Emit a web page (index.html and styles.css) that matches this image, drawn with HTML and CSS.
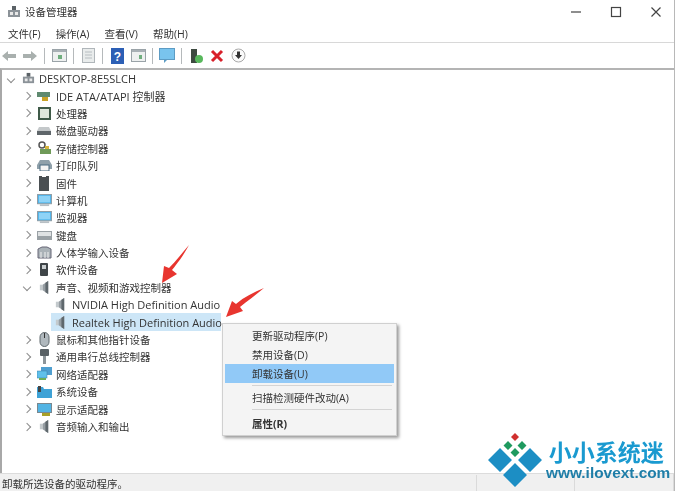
FILE: index.html
```html
<!DOCTYPE html>
<html lang="zh-CN">
<head>
  <meta charset="UTF-8" />
  <title>设备管理器</title>
  <link rel="stylesheet" href="styles.css">
</head>
<body>
  <svg class="sprite" width="0" height="0">
    <symbol id="speaker" viewBox="0 0 14 16">
      <path d="M2 5h3v6H2z" fill="#c4cacd"/>
      <path d="M5 5l6-4v14l-6-4z" fill="#969ea3"/>
      <path d="M8 3l3-2v14l-3-2z" fill="#5f686d"/>
    </symbol>
    <symbol id="computer" viewBox="0 0 14 14">
      <rect x="1" y="5" width="12" height="7" fill="#8b9298"/>
      <rect x="5" y="1" width="4" height="4" fill="#5b6267"/>
      <rect x="3" y="7" width="3" height="3" fill="#e8e8e8"/>
      <rect x="8" y="7" width="3" height="3" fill="#e8e8e8"/>
    </symbol>
    <symbol id="monitor" viewBox="0 0 16 14">
      <rect x="0.5" y="0.5" width="15" height="10" fill="#4fb4ea" stroke="#8f9aa2"/>
      <rect x="2" y="2" width="12" height="7" fill="#8fd3f6"/>
      <rect x="3" y="11" width="10" height="2" fill="#b8bfc4"/>
    </symbol>
  </svg>

  <div class="window">
    <header class="titlebar">
      <svg class="title-icon" width="14" height="14"><use href="#computer"/></svg>
      <span class="title-text">设备管理器</span>
      <div class="caption">
        <svg width="12" height="12" viewBox="0 0 12 12"><path d="M1 6h10" stroke="#444" stroke-width="1.2"/></svg>
        <svg width="12" height="12" viewBox="0 0 12 12"><rect x="1.5" y="1.5" width="9" height="9" fill="none" stroke="#444" stroke-width="1.2"/></svg>
        <svg width="12" height="12" viewBox="0 0 12 12"><path d="M1.5 1.5l9 9M10.5 1.5l-9 9" stroke="#444" stroke-width="1.2"/></svg>
      </div>
    </header>

    <nav class="menubar">
      <span>文件(F)</span>
      <span>操作(A)</span>
      <span>查看(V)</span>
      <span>帮助(H)</span>
    </nav>

    <div class="toolbar">
      <span class="tool"><svg width="14" height="12" viewBox="0 0 14 12"><path d="M0 6l6-5v3h8v4H6v3z" fill="#a9b0ae"/></svg></span>
      <span class="tool"><svg width="14" height="12" viewBox="0 0 14 12"><path d="M14 6L8 1v3H0v4h8v3z" fill="#a9b0ae"/></svg></span>
      <span class="sep"></span>
      <span class="tool"><svg width="15" height="13" viewBox="0 0 15 13"><rect x="0.5" y="0.5" width="14" height="12" fill="#eef0f0" stroke="#9aa3a8"/><rect x="1" y="1" width="13" height="2" fill="#a8b0b5"/><rect x="6" y="6" width="4" height="4" fill="#6fae7e"/></svg></span>
      <span class="sep"></span>
      <span class="tool"><svg width="13" height="15" viewBox="0 0 13 15"><rect x="0.5" y="0.5" width="12" height="14" fill="#e9ecec" stroke="#b0b6ba"/><path d="M3 4h7M3 7h7M3 10h7" stroke="#b8bec2"/></svg></span>
      <span class="sep"></span>
      <span class="tool"><svg width="13" height="16" viewBox="0 0 13 16"><rect width="13" height="16" fill="#2c5fb5"/><text x="6.5" y="12.5" class="help-mark">?</text></svg></span>
      <span class="tool"><svg width="15" height="13" viewBox="0 0 15 13"><rect x="0.5" y="0.5" width="14" height="12" fill="#eef0f0" stroke="#9aa3a8"/><rect x="1" y="1" width="13" height="2" fill="#a8b0b5"/><rect x="8" y="6" width="3" height="4" fill="#6fae7e"/></svg></span>
      <span class="sep"></span>
      <span class="tool"><svg width="16" height="16" viewBox="0 0 16 16"><rect x="0.5" y="0.5" width="15" height="11" fill="#79c4ee" stroke="#5d9cc4"/><path d="M5 12v3l3-3z" fill="#5d9cc4"/></svg></span>
      <span class="sep"></span>
      <span class="tool"><svg width="14" height="16" viewBox="0 0 14 16"><rect x="2" y="1" width="6" height="14" fill="#3d4a40"/><circle cx="10" cy="11" r="4" fill="#58b85c"/></svg></span>
      <span class="tool"><svg width="14" height="14" viewBox="0 0 14 14"><path d="M2 2l10 10M12 2L2 12" stroke="#d8202a" stroke-width="3"/></svg></span>
      <span class="tool"><svg width="15" height="15" viewBox="0 0 15 15"><circle cx="7.5" cy="7.5" r="6.5" fill="#fafafa" stroke="#a8a8a8"/><path d="M6 3.5h3v3.5h2l-3.500 4-3.500-4h2z" fill="#333"/></svg></span>
    </div>

    <main class="tree">
      <div class="row root"><i class="chev open"></i><svg class="ico" width="13" height="13"><use href="#computer"/></svg><span class="latin">DESKTOP-8E5SLCH</span></div>

      <div class="row"><i class="chev"></i><svg class="ico" width="14" height="12" viewBox="0 0 14 12"><rect y="2" width="13" height="5" fill="#5f8a70"/><rect x="5" y="7" width="6" height="4" fill="#c9a227"/></svg><span class="latin">IDE ATA/ATAPI 控制器</span></div>
      <div class="row"><i class="chev"></i><svg class="ico" width="13" height="13" viewBox="0 0 13 13"><rect x="1" y="1" width="11" height="11" fill="#dfe8dc" stroke="#3f5a48" stroke-width="2"/></svg><span>处理器</span></div>
      <div class="row"><i class="chev"></i><svg class="ico" width="14" height="8" viewBox="0 0 14 8"><path d="M2 0h10l2 4H0z" fill="#c4c8ca"/><rect y="4" width="14" height="4" fill="#5f666a"/></svg><span>磁盘驱动器</span></div>
      <div class="row"><i class="chev"></i><svg class="ico" width="14" height="14" viewBox="0 0 14 14"><circle cx="5" cy="4" r="3" fill="none" stroke="#555" stroke-width="1.500"/><rect x="3" y="8" width="11" height="5" fill="#6f9a58"/><rect x="8" y="5" width="4" height="3" fill="#d6b43c"/></svg><span>存储控制器</span></div>
      <div class="row"><i class="chev"></i><svg class="ico" width="15" height="11" viewBox="0 0 15 11"><path d="M3 0h9l3 5v4H0V5z" fill="#8fa0aa"/><rect x="3" y="5" width="9" height="6" fill="#f4f4f4" stroke="#4a6a80"/></svg><span>打印队列</span></div>
      <div class="row"><i class="chev"></i><svg class="ico" width="12" height="15" viewBox="0 0 12 15"><path d="M1 0h3v1h4V0h3v15H1z" fill="#4a4f52"/></svg><span>固件</span></div>
      <div class="row"><i class="chev"></i><svg class="ico" width="15" height="13"><use href="#monitor"/></svg><span>计算机</span></div>
      <div class="row"><i class="chev"></i><svg class="ico" width="15" height="13"><use href="#monitor"/></svg><span>监视器</span></div>
      <div class="row"><i class="chev"></i><svg class="ico" width="15" height="9" viewBox="0 0 15 9"><rect width="15" height="9" fill="#9aa1a5"/><rect x="1" y="1" width="13" height="4" fill="#dfe2e3"/></svg><span>键盘</span></div>
      <div class="row"><i class="chev"></i><svg class="ico" width="15" height="13" viewBox="0 0 15 13"><path d="M1 12V3l4-2h5l4 2v9z" fill="#aab2b7" stroke="#667"/><path d="M4 12V6M8 12V6M11 12V6" stroke="#f2f2f2"/></svg><span>人体学输入设备</span></div>
      <div class="row"><i class="chev"></i><svg class="ico" width="8" height="13" viewBox="0 0 8 13"><rect width="8" height="13" rx="1" fill="#3f4548"/><rect x="2" y="2" width="4" height="4" fill="#c9ced0"/></svg><span>软件设备</span></div>

      <div class="row"><i class="chev open"></i><svg class="ico" width="13" height="15"><use href="#speaker"/></svg><span>声音、视频和游戏控制器</span></div>
      <div class="row child"><svg class="ico" width="13" height="15"><use href="#speaker"/></svg><span class="latin">NVIDIA High Definition Audio</span></div>
      <div class="row child selected"><svg class="ico" width="13" height="15"><use href="#speaker"/></svg><span class="latin">Realtek High Definition Audio</span></div>

      <div class="row"><i class="chev"></i><svg class="ico" width="11" height="15" viewBox="0 0 11 15"><rect x="1" y="0.500" width="9" height="14" rx="4.500" fill="#b0b8bd" stroke="#5f686d"/><path d="M5.500 1v5" stroke="#333"/></svg><span>鼠标和其他指针设备</span></div>
      <div class="row"><i class="chev"></i><svg class="ico" width="9" height="15" viewBox="0 0 9 15"><rect width="9" height="7" rx="1" fill="#596165"/><rect x="3" y="7" width="3" height="8" fill="#8d9599"/></svg><span>通用串行总线控制器</span></div>
      <div class="row"><i class="chev"></i><svg class="ico" width="15" height="14" viewBox="0 0 15 14"><rect x="4" y="0" width="11" height="8" fill="#4f9fd0"/><rect x="0" y="4" width="10" height="7" fill="#5fc0ea" stroke="#3a7ea8" stroke-width="0.500"/><rect x="2" y="11" width="7" height="2" fill="#6fae58"/></svg><span>网络适配器</span></div>
      <div class="row"><i class="chev"></i><svg class="ico" width="15" height="12" viewBox="0 0 15 12"><path d="M0 1h6l1 2h8v9H0z" fill="#3ea2d6"/><rect x="1" y="0" width="3" height="6" fill="#444"/></svg><span>系统设备</span></div>
      <div class="row"><i class="chev"></i><svg class="ico" width="15" height="13" viewBox="0 0 15 13"><rect x="0.500" y="0.500" width="14" height="9" fill="#52b4e4" stroke="#788890"/><rect x="5" y="10" width="8" height="3" fill="#a8a028"/></svg><span>显示适配器</span></div>
      <div class="row"><i class="chev"></i><svg class="ico" width="13" height="15"><use href="#speaker"/></svg><span>音频输入和输出</span></div>
    </main>

    <footer class="statusbar">
      <span class="status-text">卸载所选设备的驱动程序。</span>
      <span class="status-cell"></span>
      <span class="status-cell"></span>
    </footer>

    <ul class="context-menu">
      <li>更新驱动程序(P)</li>
      <li>禁用设备(D)</li>
      <li class="active">卸载设备(U)</li>
      <li class="divider"></li>
      <li>扫描检测硬件改动(A)</li>
      <li class="divider"></li>
      <li class="strong">属性(R)</li>
    </ul>
  </div>

  <svg class="arrow arrow-one" width="30" height="40" viewBox="0 0 30 40"><path d="M28 1C22 12 16 20 11 26l5 4-15 9 2-17 5 2C15 17 22 8 28 1z" fill="#e8352f"/></svg>
  <svg class="arrow arrow-two" width="40" height="32" viewBox="0 0 40 32"><path d="M38 1C30 8 21 14 14 20l3 4L0 30l6-16 4 3C18 10 28 5 38 1z" fill="#e8352f"/></svg>

  <div class="logo">
    <svg class="logo-mark" width="64" height="56" viewBox="0 0 64 56">
      <path d="M32 0l4 4-4 4-4-4z" fill="#d0302e"/>
      <path d="M25 8l4.500 4.500-4.500 4.500-4.500-4.500zM39 8l4.500 4.500-4.500 4.500-4.500-4.500zM32 15l4.500 4.500-4.500 4.500-4.500-4.500z" fill="#1f9a5f"/>
      <path d="M17 15l12 12-12 12-12-12zM47 15l12 12-12 12-12-12zM32 30l12 12-12 12-12-12z" fill="#1c8ec4"/>
    </svg>
    <div class="logo-text">
      <span class="logo-name">小小系统迷</span>
      <span class="logo-url">www.ilovext.com</span>
    </div>
  </div>
</body>
</html>
```

FILE: styles.css
```css
* {
  margin: 0;
  padding: 0;
  box-sizing: border-box;
}

html, body {
  background: #fff;
  overflow: hidden;
}

body {
  position: relative;
  width: 677px;
  height: 491px;
  font-family: "Open Sans", "Noto Sans CJK SC", sans-serif;
  font-size: 10.5px;
  color: #333;
}

.sprite {
  position: absolute;
}

.window {
  position: relative;
  width: 675px;
  height: 491px;
  display: flex;
  flex-direction: column;
  border-right: 1px solid #b8b8b8;
  filter: blur(0.5px);
}

.titlebar {
  height: 23px;
  display: flex;
  align-items: center;
  padding-left: 7px;
  flex-shrink: 0;
}

.title-text {
  margin-left: 4px;
}

.caption {
  margin-left: auto;
  display: flex;
  gap: 28px;
  padding-right: 12px;
}

.menubar {
  height: 20px;
  display: flex;
  align-items: center;
  gap: 15px;
  padding: 1px 0 0 8px;
  border-bottom: 1px solid #d8d8d8;
  flex-shrink: 0;
}

.toolbar {
  height: 25px;
  display: flex;
  align-items: center;
  margin-left: -1px;
  gap: 1px;
  flex-shrink: 0;
}

.tool {
  width: 20px;
  display: flex;
  justify-content: center;
}

.sep {
  width: 1px;
  height: 16px;
  margin: 0 3px;
  background: #b5b9bb;
}

.help-mark {
  font-family: "Liberation Sans", sans-serif;
  font-size: 12px;
  font-weight: bold;
  fill: #fff;
  text-anchor: middle;
}

.tree {
  flex: 1;
  border-top: 2px solid #b4b4b4;
  border-left: 2px solid #a8a8a8;
}

.row {
  height: 17.4px;
  display: grid;
  grid-template-columns: 13px 16px 1fr;
  column-gap: 0;
  align-items: center;
  padding-left: 21px;
  white-space: nowrap;
}

.row .ico {
  justify-self: center;
}

.row span {
  padding-left: 4px;
}

.latin {
  font-size: 11px;
}

.chev {
  width: 6px;
  height: 6px;
  margin-left: 1px;
  border-top: 1px solid #8c8c8c;
  border-right: 1px solid #8c8c8c;
  transform: rotate(45deg);
}

.chev.open {
  transform: rotate(135deg);
}

.root {
  padding-left: 5px;
}

.root span {
  padding-left: 3px;
}

.child {
  grid-template-columns: 16px 1fr;
  padding-left: 50px;
}

.selected {
  width: 170px;
  margin-left: 49px;
  padding-left: 1px;
  background: #cde6f7;
}

.statusbar {
  height: 18px;
  display: flex;
  align-items: center;
  background: #f0f0f0;
  border-top: 1px solid #dcdcdc;
  flex-shrink: 0;
}

.status-text {
  width: 484px;
  padding: 1px 0 0 2px;
  border-right: 1px solid #dadada;
}

.status-cell {
  width: 100px;
  height: 100%;
  border-right: 1px solid #dadada;
}

.context-menu {
  position: absolute;
  left: 222px;
  top: 323px;
  width: 175px;
  height: 113px;
  padding: 2px 2px 2px;
  list-style: none;
  background: #f4f4f4;
  border: 1px solid #d0d0d0;
  box-shadow: 2px 2px 3px rgba(0, 0, 0, 0.4);
}

.context-menu li {
  height: 19px;
  display: flex;
  align-items: center;
  padding-left: 27px;
}

.context-menu .active {
  background: #91c9f7;
}

.context-menu .divider {
  height: 1px;
  margin: 2px 2px 2px 27px;
  background: #d4d4d4;
}

.context-menu .strong {
  margin-top: 4px;
  font-weight: bold;
}

.arrow {
  position: absolute;
}

.arrow-one {
  left: 161px;
  top: 244px;
}

.arrow-two {
  left: 226px;
  top: 287px;
}

.logo {
  position: absolute;
  left: 483px;
  top: 433px;
  display: flex;
}

.logo-text {
  display: flex;
  flex-direction: column;
  align-items: center;
  margin-top: 4px;
}

.logo-name {
  margin-right: 5px;
  font-family: "Noto Sans CJK SC", sans-serif;
  font-size: 23px;
  line-height: 28px;
  font-weight: 700;
  color: #1a9ad0;
}

.logo-url {
  margin-left: -1px;
  font-family: "Liberation Sans", sans-serif;
  font-size: 15.4px;
  line-height: 15px;
  font-weight: bold;
  color: #1f7ea8;
}
```
